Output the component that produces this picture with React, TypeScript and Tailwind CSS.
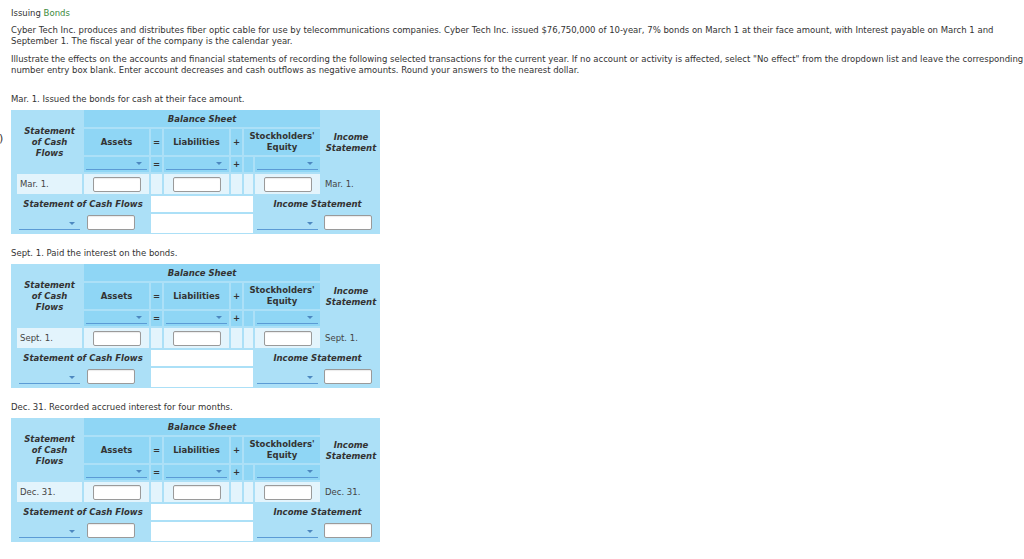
import React from "react";

function Drop({ pb }: { pb: string }) {
  return (
    <div className={`flex h-full flex-col justify-end px-[2px] ${pb}`}>
      <div className="flex h-[9px] items-start justify-end border-b border-[#5b9bd5] pr-[5px] pt-[1px]">
        <div className="h-0 w-0 border-l-[3px] border-r-[3px] border-t-[3px] border-l-transparent border-r-transparent border-t-[#4d88c0]" />
      </div>
    </div>
  );
}

function Box() {
  return <div className="h-[15px] w-[48px] rounded-[2px] border border-[#9a9a9a] bg-white shadow-[inset_0_1px_1px_rgba(0,0,0,0.08)]" />;
}

function Section({ label, date, first }: { label: string; date: string; first?: boolean }) {
  const dark = "bg-[#8fd6f5]";
  const pale = "bg-[#e3f4fc]";
  const hb = "font-bold text-[#333]";
  return (
    <div>
      <div className={`${first ? "mt-[18px]" : "mt-[14px]"} leading-[11px] text-[#333]`}>{label}</div>
      <div className="relative mt-[5px] w-[369px]">
        {first && <span className="absolute left-[-12px] top-[23px] text-[11px] leading-[11px] text-[#333]">)</span>}
        <div className="grid w-[369px] grid-cols-[65px_65px_11px_65px_11px_9px_65px_58px] grid-rows-[17px_26px_15px_20px_16px_19px] gap-[2px] bg-[#ace0f7] pb-[1px] pl-[6px] leading-[11px]">
          <div className={`col-start-1 row-start-1 row-span-3 flex items-center justify-center pt-[3px] text-center italic ${hb}`}>
            Statement<br />of Cash<br />Flows
          </div>
          <div className={`col-start-2 col-span-6 row-start-1 flex items-center justify-center pt-[2px] italic ${dark} ${hb}`}>Balance Sheet</div>
          <div className={`col-start-8 row-start-1 row-span-3 flex items-center justify-center pt-[3px] text-center italic ${hb}`}>
            Income<br />Statement
          </div>

          <div className={`col-start-2 row-start-2 flex items-center justify-center ${dark} ${hb}`}>Assets</div>
          <div className={`col-start-3 row-start-2 flex items-center justify-center ${dark} ${hb}`}>=</div>
          <div className={`col-start-4 row-start-2 flex items-center justify-center ${dark} ${hb}`}>Liabilities</div>
          <div className={`col-start-5 row-start-2 flex items-center justify-center ${dark} ${hb}`}>+</div>
          <div className={`col-start-6 col-span-2 row-start-2 flex items-center justify-center text-center ${dark} ${hb}`}>
            Stockholders'<br />Equity
          </div>

          <div className={`col-start-2 row-start-3 ${dark}`}><Drop pb="pb-[2px]" /></div>
          <div className={`col-start-3 row-start-3 flex items-center justify-center ${dark} ${hb}`}>=</div>
          <div className={`col-start-4 row-start-3 ${dark}`}><Drop pb="pb-[2px]" /></div>
          <div className={`col-start-5 row-start-3 flex items-center justify-center ${dark} ${hb}`}>+</div>
          <div className={`col-start-6 row-start-3 ${dark}`} />
          <div className={`col-start-7 row-start-3 ${dark}`}><Drop pb="pb-[2px]" /></div>

          <div className={`col-start-1 row-start-4 flex items-center pl-[3px] text-[#444] ${pale}`}>{date}</div>
          <div className={`col-start-2 row-start-4 flex items-center justify-center ${pale}`}><Box /></div>
          <div className={`col-start-3 row-start-4 ${pale}`} />
          <div className={`col-start-4 row-start-4 flex items-center justify-center ${pale}`}><Box /></div>
          <div className={`col-start-5 row-start-4 ${pale}`} />
          <div className={`col-start-6 row-start-4 ${pale}`} />
          <div className={`col-start-7 row-start-4 flex items-center justify-center ${pale}`}><Box /></div>
          <div className="col-start-8 row-start-4 flex items-center pl-[3px] text-[#444]">{date}</div>

          <div className={`col-start-1 col-span-2 row-start-5 flex items-center justify-center italic ${hb}`}>Statement of Cash Flows</div>
          <div className="col-start-3 col-span-4 row-start-5 bg-white" />
          <div className={`col-start-7 col-span-2 row-start-5 flex items-center justify-center italic ${hb}`}>Income Statement</div>

          <div className="col-start-1 row-start-6"><Drop pb="pb-[3px]" /></div>
          <div className="col-start-2 row-start-6 pl-[3px] pt-[1px]"><Box /></div>
          <div className="col-start-3 col-span-4 row-start-6 bg-white" />
          <div className="col-start-7 row-start-6"><Drop pb="pb-[3px]" /></div>
          <div className="col-start-8 row-start-6 pl-[2px] pt-[1px]"><Box /></div>
        </div>
      </div>
    </div>
  );
}

export default function App() {
  return (
    <div className="min-h-[559px] w-[1024px] bg-white pl-[11px] pt-[8px] font-['DejaVu_Sans',Verdana,sans-serif] text-[8.5px] text-[#333]">
      <div className="leading-[11px]">
        Issuing <span className="text-[#3d8b3d]">Bonds</span>
      </div>
      <p className="mt-[6px] whitespace-nowrap leading-[11px]">
        Cyber Tech Inc. produces and distributes fiber optic cable for use by telecommunications companies. Cyber Tech Inc. issued $76,750,000 of 10-year, 7% bonds on March 1 at their face amount, with Interest payable on March 1 and
        <br />
        September 1. The fiscal year of the company is the calendar year.
      </p>
      <p className="mt-[7px] whitespace-nowrap leading-[11px]">
        Illustrate the effects on the accounts and financial statements of recording the following selected transactions for the current year. If no account or activity is affected, select "No effect" from the dropdown list and leave the corresponding
        <br />
        number entry box blank. Enter account decreases and cash outflows as negative amounts. Round your answers to the nearest dollar.
      </p>
      <Section label="Mar. 1. Issued the bonds for cash at their face amount." date="Mar. 1." first />
      <Section label="Sept. 1. Paid the interest on the bonds." date="Sept. 1." />
      <Section label="Dec. 31. Recorded accrued interest for four months." date="Dec. 31." />
    </div>
  );
}
